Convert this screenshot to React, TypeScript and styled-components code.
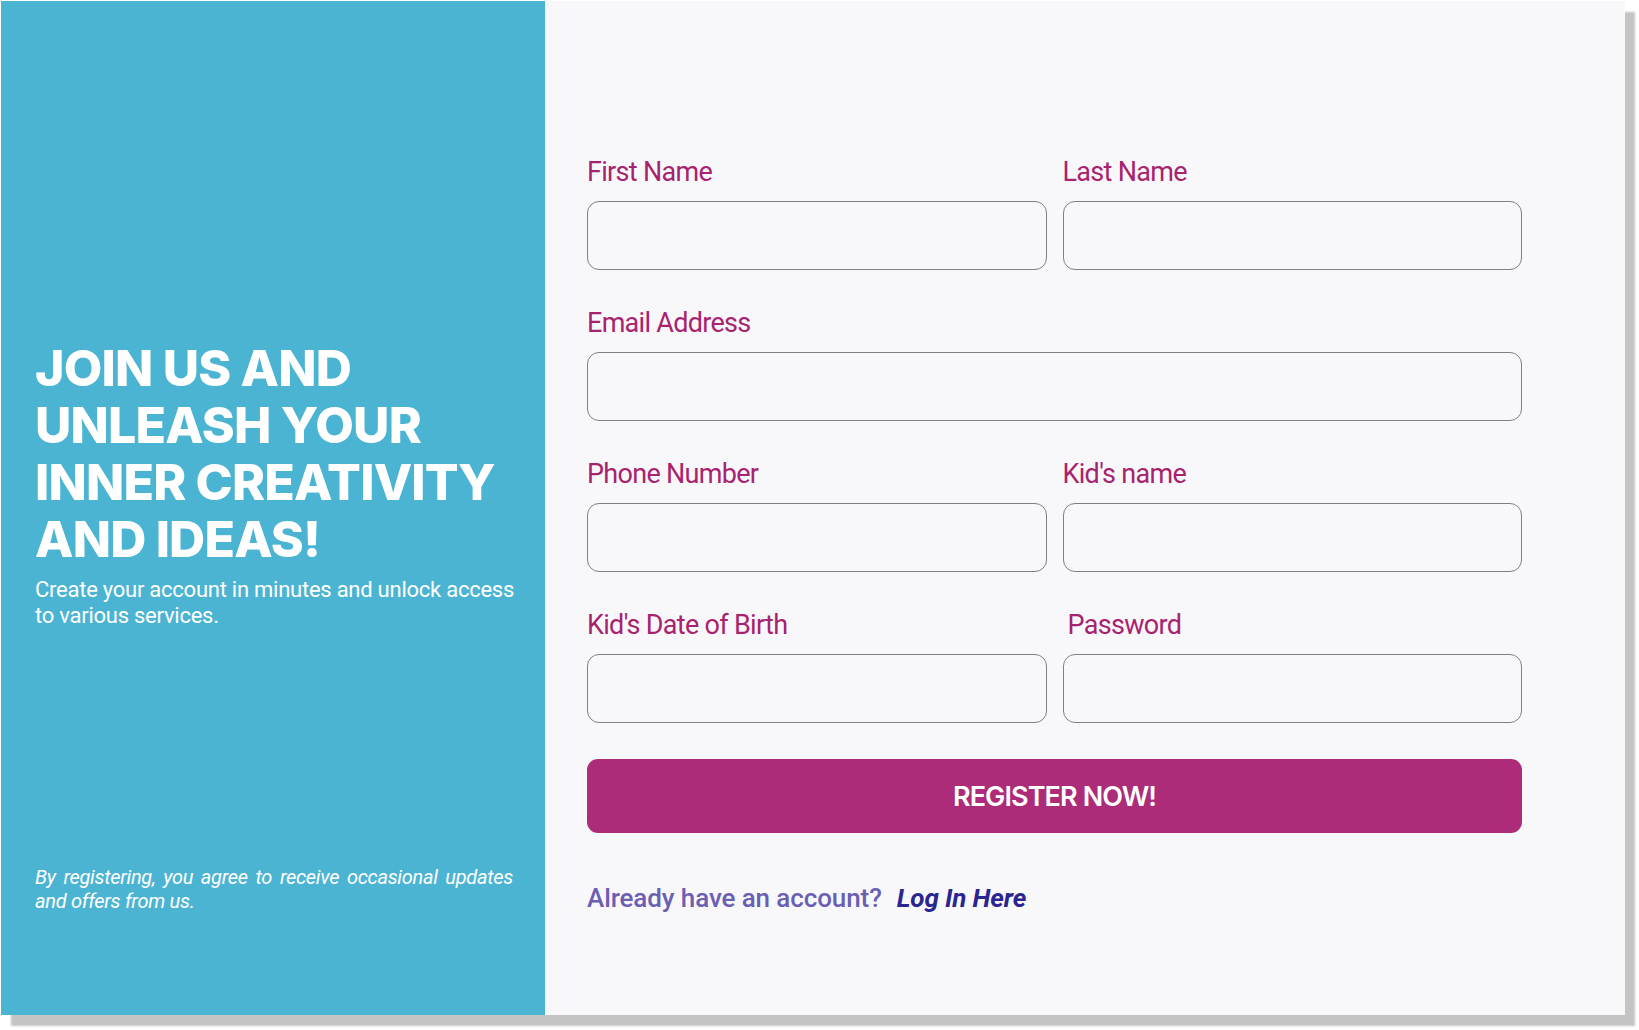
import * as React from "react";
import styled, { createGlobalStyle } from "styled-components";

const GlobalStyle = createGlobalStyle`
  html, body {
    margin: 0;
    padding: 0;
    background: #ffffff;
  }
  * {
    box-sizing: border-box;
  }
`;

const Page = styled.div`
  min-height: 100vh;
  padding: 1px 0 16px 1px;
`;

const Card = styled.div`
  width: 1624px;
  height: 1014px;
  display: grid;
  grid-template-columns: 544px 1fr;
  box-shadow: 10px 11px 2px #c4c4c4;
`;

const Side = styled.aside`
  background: #4bb4d2;
  color: #ffffff;
  display: flex;
  flex-direction: column;
  padding: 339px 32px 102px 34px;
`;

const Heading = styled.h1`
  margin: 0;
  font-family: Inter, "Liberation Sans", sans-serif;
  font-weight: 800;
  font-size: 50px;
  line-height: 57px;
  letter-spacing: -0.8px;
  text-transform: uppercase;
`;

const Lead = styled.p`
  margin: 9px 0 0;
  font-family: Roboto, "Liberation Sans", sans-serif;
  font-size: 22px;
  line-height: 26px;
  letter-spacing: -0.25px;
  width: 482px;
`;

const Note = styled.p`
  margin: auto 0 0;
  width: 478px;
  font-family: Roboto, "Liberation Sans", sans-serif;
  font-style: italic;
  font-size: 20px;
  line-height: 24px;
  letter-spacing: -0.3px;
  text-align: justify;
`;

const Main = styled.main`
  background: #f8f8fa;
  padding: 155px 0 0 42px;
`;

const Form = styled.form`
  width: 935px;
  display: grid;
  grid-template-columns: 1fr 1fr;
  column-gap: 16px;
  row-gap: 37px;
`;

const Field = styled.div<{ wide?: boolean }>`
  display: flex;
  flex-direction: column;
  grid-column: ${p => (p.wide ? "1 / -1" : "auto")};
`;

const Label = styled.label<{ indent?: number }>`
  font-family: Roboto, "Liberation Sans", sans-serif;
  font-size: 27px;
  line-height: 32px;
  letter-spacing: -0.7px;
  color: #a8236f;
  margin-bottom: 13px;
  padding-left: ${p => p.indent || 0}px;
`;

const Input = styled.input`
  height: 69px;
  width: 100%;
  border: 1.5px solid #808080;
  border-radius: 12px;
  background: transparent;
  padding: 0 16px;
  font-size: 20px;
  outline: none;
`;

const Submit = styled.button`
  grid-column: 1 / -1;
  margin-top: -1px;
  height: 74px;
  border: none;
  border-radius: 11px;
  background: #ad2c79;
  color: #ffffff;
  font-family: Inter, "Liberation Sans", sans-serif;
  font-weight: 600;
  font-size: 27px;
  letter-spacing: -0.9px;
  cursor: pointer;
`;

const Footer = styled.p`
  grid-column: 1 / -1;
  margin: 13px 0 0;
  font-family: Roboto, "Liberation Sans", sans-serif;
  font-size: 26px;
  line-height: 30px;
  font-weight: 500;
  letter-spacing: -0.1px;
  color: #6a5fb3;
`;

const LoginLink = styled.a`
  margin-left: 15px;
  font-weight: 700;
  font-style: italic;
  color: #2a2590;
  text-decoration: none;
`;

const fields = [
  { label: "First Name" },
  { label: "Last Name" },
  { label: "Email Address", wide: true },
  { label: "Phone Number" },
  { label: "Kid's name" },
  { label: "Kid's Date of Birth" },
  { label: "Password", indent: 5, type: "password" }
];

export default function App() {
  return (
    <Page>
      <GlobalStyle />
      <Card>
        <Side>
          <Heading>
            Join us and
            <br />
            unleash your
            <br />
            inner creativity
            <br />
            and ideas!
          </Heading>
          <Lead>
            Create your account in minutes and unlock access to various
            services.
          </Lead>
          <Note>
            By registering, you agree to receive occasional updates and offers
            from us.
          </Note>
        </Side>
        <Main>
          <Form onSubmit={e => e.preventDefault()}>
            {fields.map(f => (
              <Field key={f.label} wide={f.wide}>
                <Label indent={f.indent}>{f.label}</Label>
                <Input type={f.type || "text"} />
              </Field>
            ))}
            <Submit type="submit">REGISTER NOW!</Submit>
            <Footer>
              Already have an account?
              <LoginLink href="#">Log In Here</LoginLink>
            </Footer>
          </Form>
        </Main>
      </Card>
    </Page>
  );
}
